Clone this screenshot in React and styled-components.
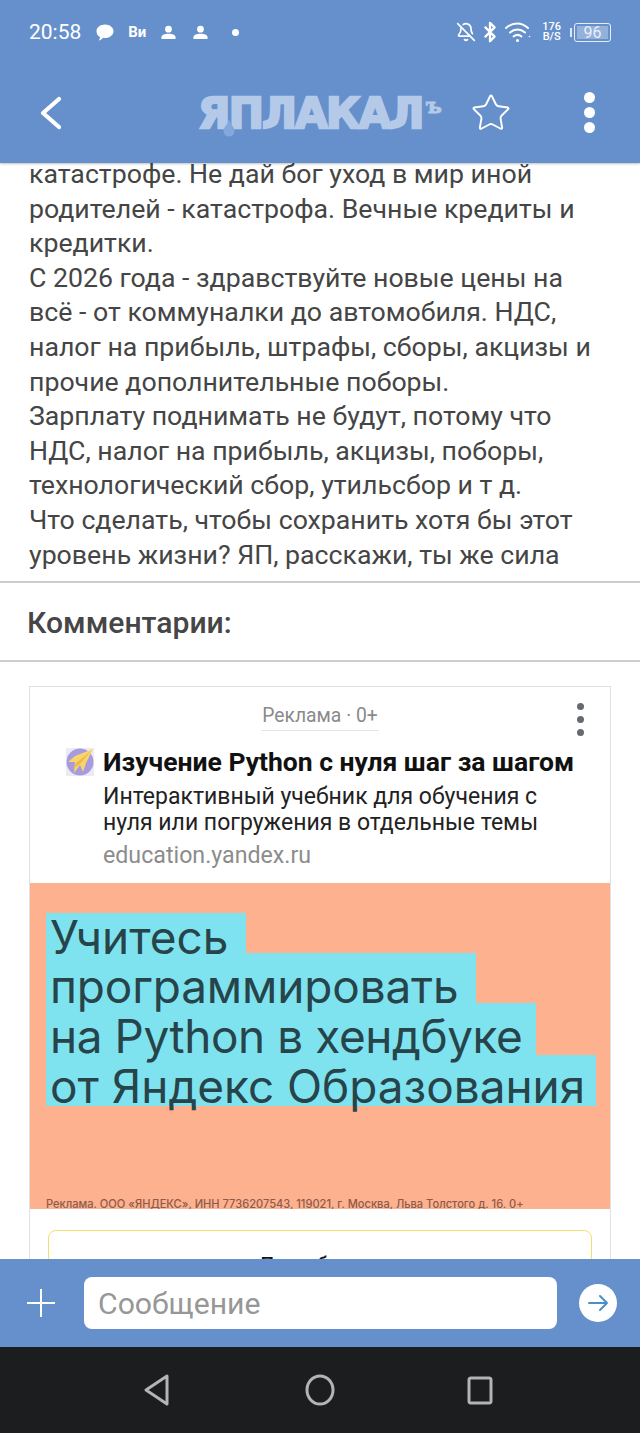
import React from "react";
import styled, { createGlobalStyle } from "styled-components";
import { Star, BellOff, Bluetooth } from "lucide-react";

const GlobalStyle = createGlobalStyle`
  html, body {
    margin: 0;
    padding: 0;
    background: #fff;
    font-family: Roboto, "Liberation Sans", sans-serif;
  }
`;

const Screen = styled.div`
  width: 640px;
  height: 1433px;
  display: flex;
  flex-direction: column;
  overflow: hidden;
`;

//
const Header = styled.header`
  height: 163px;
  flex: none;
  background: #6690cb;
  box-shadow: 0 1px 2px rgba(0, 0, 0, 0.25);
  position: relative;
  z-index: 2;
  display: flex;
  flex-direction: column;
`;
const StatusBar = styled.div`
  height: 64px;
  padding: 0 29px;
  display: flex;
  align-items: center;
  justify-content: space-between;
  color: #fff;
`;
const StatusGroup = styled.div`
  display: flex;
  align-items: center;
`;
const Time = styled.span`
  font-size: 21px;
  margin-right: 15px;
`;
const Carrier = styled.span`
  font-size: 15px;
  font-weight: 700;
  margin: 0 15px 0 14px;
`;
const PersonSlot = styled.span`
  display: flex;
  margin-right: ${(p) => p.$right}px;
`;
const MutedBell = styled(BellOff)`
  margin-right: 6px;
`;
const BluetoothIcon = styled(Bluetooth)`
  margin: 0 4px 0 -3px;
`;
const Speed = styled.span`
  display: flex;
  flex-direction: column;
  align-items: center;
  font-size: 11px;
  font-weight: 500;
  line-height: 10px;
  margin: 0 13px 0 11px;
`;
const Battery = styled.span`
  width: 37px;
  height: 19px;
  box-sizing: border-box;
  border: 1.5px solid #e6edf7;
  border-radius: 3px;
  padding: 2px;
  display: flex;
  position: relative;
  &::before {
    content: "";
    position: absolute;
    left: -5px;
    top: 4px;
    width: 2px;
    height: 9px;
    background: #dfe8f5;
  }
`;
const BatteryFill = styled.span`
  flex: 1;
  background: rgba(255, 255, 255, 0.3);
  font-size: 16px;
  line-height: 13px;
  text-align: center;
  color: #e8eff8;
`;
const Toolbar = styled.div`
  flex: 1;
  display: grid;
  grid-template-columns: 158px 273px 40px 1fr;
  align-items: center;
  padding-left: 40px;
  margin-top: -2px;
`;
const Logo = styled.div`
  position: relative;
  padding-top: 2px;
  font-family: "DejaVu Sans", sans-serif;
  font-size: 42px;
  font-weight: 700;
  color: #b4cae8;
  -webkit-text-stroke: 2.4px #b4cae8;
  letter-spacing: -1.7px;
  line-height: 46px;
  white-space: nowrap;
  display: flex;
`;
const LogoTail = styled.span`
  font-family: "DejaVu Serif", serif;
  font-size: 21px;
  line-height: 30px;
  letter-spacing: 0;
  -webkit-text-stroke: 0.8px #b4cae8;
  margin-left: 3px;
`;
const LogoDrop = styled.svg`
  position: absolute;
  left: 25px;
  top: 30px;
`;
const FavStar = styled(Star)`
  margin-left: -1px;
`;
const Kebab = styled.div`
  justify-self: end;
  margin-right: 45px;
  display: flex;
  flex-direction: column;
  gap: 4px;
`;
const Dot = styled.span`
  width: ${(p) => p.$size}px;
  height: ${(p) => p.$size}px;
  border-radius: 50%;
  background: ${(p) => p.$color};
`;

//
const Main = styled.main`
  flex: 1;
  overflow: hidden;
  background: #fff;
`;
const Article = styled.article`
  margin-top: -6px;
  padding: 0 40px 0 29px;
  height: 424px;
  overflow: hidden;
  font-size: 26.7px;
  line-height: 34.6px;
  color: #454545;
`;
const Divider = styled.div`
  height: 2px;
  background: #cdcdcd;
`;
const CommentsTitle = styled.h2`
  margin: 0;
  padding: 2px 0 0 27px;
  height: 77px;
  box-sizing: border-box;
  display: flex;
  align-items: center;
  font-size: 30.1px;
  font-weight: 500;
  color: #464646;
`;
const AdCard = styled.section`
  margin: 24px 29px 0;
  border: 1px solid #e2e2e2;
  border-bottom: none;
  background: #fff;
`;
const AdHead = styled.div`
  position: relative;
  height: 196px;
  padding-top: 15px;
  box-sizing: border-box;
`;
const AdLabel = styled.div`
  width: 118px;
  margin: 0 auto;
  text-align: center;
  font-size: 19.3px;
  line-height: 28px;
  color: #8a8a8a;
  border-bottom: 1px solid #e4e4e4;
  white-space: nowrap;
`;
const AdMenu = styled.div`
  position: absolute;
  right: 26px;
  top: 16px;
  display: flex;
  flex-direction: column;
  gap: 6px;
`;
const AdBody = styled.div`
  display: flex;
  align-items: flex-start;
  gap: 9px;
  margin: 16px 0 0 36px;
`;
const AdIcon = styled.svg`
  flex: none;
  margin-top: 1px;
`;
const AdText = styled.div`
  display: flex;
  flex-direction: column;
`;
const AdTitle = styled.div`
  font-size: 26.5px;
  font-weight: 700;
  line-height: 30px;
  color: #111;
  white-space: nowrap;
`;
const AdDesc = styled.div`
  font-size: 23px;
  line-height: 26px;
  color: #222;
  margin-top: 7px;
  white-space: nowrap;
`;
const AdDomain = styled.div`
  font-size: 23.2px;
  line-height: 26px;
  color: #8c8c8c;
  margin-top: 6px;
`;
const Banner = styled.div`
  position: relative;
  height: 326px;
  overflow: hidden;
  background: #fdb18f;
  padding: 30px 0 0 16px;
  box-sizing: border-box;
`;
const BannerLines = styled.div`
  font-family: Inter, sans-serif;
  font-size: 45.9px;
  line-height: 50px;
  color: #27444a;
`;
const BannerLine = styled.div`
  height: ${(p) => p.$h}px;
  width: ${(p) => p.$w}px;
  padding: ${(p) => p.$top}px 0 0 4px;
  box-sizing: border-box;
  background: #7fe3ef;
  white-space: nowrap;
  letter-spacing: ${(p) => p.$ls || 0}px;
`;
const BannerLegal = styled.div`
  position: absolute;
  left: 16px;
  bottom: -1px;
  font-family: Inter, sans-serif;
  font-size: 11.1px;
  font-weight: 500;
  line-height: 12px;
  color: #8f5a4a;
  white-space: nowrap;
`;
const TryButton = styled.div`
  margin: 21px 18px 0;
  height: 60px;
  border: 1.5px solid #f3e06a;
  border-radius: 8px;
  text-align: center;
  font-size: 19px;
  font-weight: 500;
  line-height: 66px;
  color: #111;
`;

//
const Composer = styled.div`
  height: 88px;
  flex: none;
  background: #6690cb;
  position: relative;
  z-index: 2;
  display: flex;
  align-items: center;
  padding: 0 23px 0 26px;
  box-sizing: border-box;
`;
const MessageInput = styled.div`
  flex: 1;
  height: 52px;
  margin: 0 22px 0 28px;
  padding-left: 14px;
  background: #fff;
  border-radius: 8px;
  font-size: 30.2px;
  line-height: 54px;
  color: #979797;
`;
const SendButton = styled.div`
  width: 38px;
  height: 38px;
  border-radius: 50%;
  background: #fff;
  display: flex;
  align-items: center;
  justify-content: center;
`;
const NavBar = styled.nav`
  height: 86px;
  flex: none;
  padding-right: 3px;
  background: #1c1d1f;
  display: flex;
  align-items: center;
  justify-content: center;
  gap: 131px;
  svg:first-child {
    margin-right: 4px;
  }
`;

const Person = () => (
  <svg width="15" height="15" viewBox="0 0 16 16" fill="#fff">
    <circle cx="8" cy="4.5" r="3.6" />
    <path d="M.5 15v-2c0-2.400 3.600-3.600 7.500-3.600s7.500 1.200 7.500 3.600v2z" />
  </svg>
);

const Bubble = () => (
  <svg width="18" height="17" viewBox="0 0 18 17" fill="#fff">
    <path d="M9 .5c4.700 0 8.500 2.900 8.500 6.700S13.700 14 9 14c-.8 0-1.300-.1-2-.2-1 1.300-2.500 2.500-4.300 2.700.8-1 1.300-2.200 1.300-3.500C1.800 11.800.5 9.700.5 7.200.5 3.400 4.300.5 9 .5z" />
  </svg>
);

const Wifi = () => (
  <svg width="26" height="22" viewBox="0 0 26 22" fill="none" stroke="#fff" strokeWidth="2" strokeLinecap="round">
    <path d="M1 7c6.500-6 15.500-6 22 0" />
    <path d="M5 11.500c4.500-4 10.500-4 15 0" />
    <path d="M8.500 15.500c2.500-2 5.500-2 8 0" />
    <circle cx="12.500" cy="19.500" r="1.500" fill="#fff" stroke="none" />
    <circle cx="24.500" cy="15.500" r=".8" fill="#fff" stroke="none" />
  </svg>
);

const PlaneIcon = () => (
  <AdIcon width="28" height="28" viewBox="0 0 28 28">
    <rect width="28" height="28" fill="#eeeaf5" />
    <circle cx="14" cy="14" r="13.500" fill="#a79be0" />
    <path d="M27 1 9 8 2 14l7 0-1 11 6-8 3 7 3-9z" fill="#f7d56a" />
    <path d="M25 3 10 15l-3 6 7-5z" fill="#f1b94a" />
  </AdIcon>
);

export default function App() {
  return (
    <Screen>
      <GlobalStyle />
      <Header>
        <StatusBar>
          <StatusGroup>
            <Time>20:58</Time>
            <Bubble />
            <Carrier>Ви</Carrier>
            <PersonSlot $right={17}>
              <Person />
            </PersonSlot>
            <PersonSlot $right={24}>
              <Person />
            </PersonSlot>
            <Dot $size={7} $color="#fff" />
          </StatusGroup>
          <StatusGroup>
            <MutedBell size={20} color="#fff" strokeWidth={2} />
            <BluetoothIcon size={22} color="#fff" strokeWidth={2.5} />
            <Wifi />
            <Speed>
              <span>176</span>
              <span>B/S</span>
            </Speed>
            <Battery>
              <BatteryFill>96</BatteryFill>
            </Battery>
          </StatusGroup>
        </StatusBar>
        <Toolbar>
          <svg width="22" height="34" viewBox="0 0 22 34" fill="none" stroke="#fff" strokeWidth="4.2" strokeLinecap="round" strokeLinejoin="round">
            <path d="M19 3 3 17l16 14" />
          </svg>
          <Logo>
            ЯПЛАКАЛ
            <LogoTail>ъ</LogoTail>
            <LogoDrop width="12" height="18" viewBox="0 0 12 18">
              <path d="M6 0c1.500 6 5.500 8 5.500 12a5.500 5.500 0 0 1-11 0C.5 8 4.500 6 6 0z" fill="#84a8dc" />
            </LogoDrop>
          </Logo>
          <FavStar size={42} color="#fff" strokeWidth={1.1} />
          <Kebab>
            <Dot $size={11} $color="#fff" />
            <Dot $size={11} $color="#fff" />
            <Dot $size={11} $color="#fff" />
          </Kebab>
        </Toolbar>
      </Header>

      <Main>
        <Article>
          катастрофе. Не дай бог уход в мир иной родителей - катастрофа. Вечные кредиты и кредитки.
          <br />
          С 2026 года - здравствуйте новые цены на всё - от коммуналки до автомобиля. НДС, налог на прибыль, штрафы, сборы, акцизы и прочие дополнительные поборы.
          <br />
          Зарплату поднимать не будут, потому что НДС, налог на прибыль, акцизы, поборы, технологический сбор, утильсбор и т д.
          <br />
          Что сделать, чтобы сохранить хотя бы этот уровень жизни? ЯП, расскажи, ты же сила
        </Article>
        <Divider />
        <CommentsTitle>Комментарии:</CommentsTitle>
        <Divider />
        <AdCard>
          <AdHead>
            <AdLabel>Реклама · 0+</AdLabel>
            <AdMenu>
              <Dot $size={7} $color="#666a70" />
              <Dot $size={7} $color="#666a70" />
              <Dot $size={7} $color="#666a70" />
            </AdMenu>
            <AdBody>
              <PlaneIcon />
              <AdText>
                <AdTitle>Изучение Python с нуля шаг за шагом</AdTitle>
                <AdDesc>
                  Интерактивный учебник для обучения с
                  <br />
                  нуля или погружения в отдельные темы
                </AdDesc>
                <AdDomain>education.yandex.ru</AdDomain>
              </AdText>
            </AdBody>
          </AdHead>
          <Banner>
            <BannerLines>
              <BannerLine $w={200} $h={40} $top={0}>Учитесь</BannerLine>
              <BannerLine $w={430} $h={50} $top={9} $ls={-0.13}>программировать</BannerLine>
              <BannerLine $w={490} $h={52} $top={9} $ls={-0.4}>на Python в хендбуке</BannerLine>
              <BannerLine $w={550} $h={51} $top={7}>от Яндекс Образования</BannerLine>
            </BannerLines>
            <BannerLegal>Реклама. ООО «ЯНДЕКС», ИНН 7736207543, 119021, г. Москва, Льва Толстого д. 16. 0+</BannerLegal>
          </Banner>
          <TryButton>Попробовать</TryButton>
        </AdCard>
      </Main>

      <Composer>
        <svg width="30" height="30" viewBox="0 0 30 30" stroke="#fff" strokeWidth="2">
          <path d="M15 1v28M1 15h28" />
        </svg>
        <MessageInput>Сообщение</MessageInput>
        <SendButton>
          <svg width="22" height="18" viewBox="0 0 22 18" fill="none" stroke="#4a8fc9" strokeWidth="2" strokeLinecap="round" strokeLinejoin="round">
            <path d="M2 9h18M13 2l7 7-7 7" />
          </svg>
        </SendButton>
      </Composer>

      <NavBar>
        <svg width="26" height="32" viewBox="0 0 26 32" fill="none" stroke="#b4b4b4" strokeWidth="3" strokeLinejoin="round">
          <path d="M23 2v28L2 16z" />
        </svg>
        <svg width="30" height="32" viewBox="0 0 30 32" fill="none" stroke="#b4b4b4" strokeWidth="3">
          <ellipse cx="15" cy="16" rx="13" ry="14" />
        </svg>
        <svg width="28" height="32" viewBox="0 0 28 32" fill="none" stroke="#b4b4b4" strokeWidth="3" strokeLinejoin="round">
          <rect x="3" y="4" width="22" height="25" rx="2" />
        </svg>
      </NavBar>
    </Screen>
  );
}
